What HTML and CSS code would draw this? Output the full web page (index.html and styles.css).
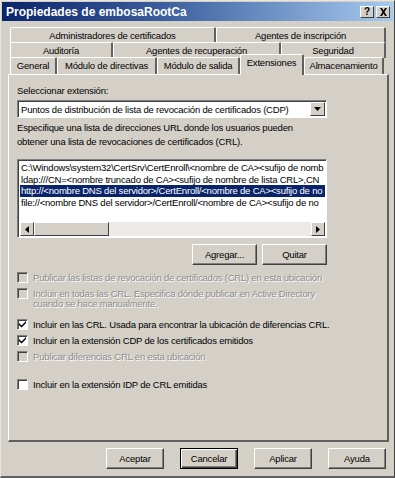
FILE: index.html
```html
<!DOCTYPE html>
<html lang="es">
<head>
  <meta charset="UTF-8" />
  <title>Propiedades de embosaRootCa</title>
  <link rel="stylesheet" href="styles.css">
</head>
<body>
<div class="window">
  <div class="titlebar">
    <span class="title">Propiedades de embosaRootCa</span>
    <div class="caption-buttons">
      <span class="cap-btn">?</span>
      <span class="cap-btn close">
        <svg width="9" height="8" viewBox="0 0 9 8"><path d="M1 0h2l1.5 2.5L6 0h2L5.5 4 8 8H6L4.5 5.5 3 8H1l2.5-4z" fill="#000"/></svg>
      </span>
    </div>
  </div>

  <!-- tabs, back rows first -->
  <div class="tabs">
    <div class="tab-row back">
      <div class="tab w-admin">Administradores de certificados</div>
      <div class="tab w-insc">Agentes de inscripción</div>
    </div>
    <div class="tab-row back">
      <div class="tab w-audit">Auditoría</div>
      <div class="tab w-recup">Agentes de recuperación</div>
      <div class="tab w-seg">Seguridad</div>
    </div>
    <div class="tab-row front">
      <div class="tab w-gen">General</div>
      <div class="tab w-dir">Módulo de directivas</div>
      <div class="tab w-sal">Módulo de salida</div>
      <div class="tab w-ext active">Extensiones</div>
      <div class="tab w-alm">Almacenamiento</div>
    </div>
  </div>

  <div class="panel">
    <div class="label">Seleccionar extensión:</div>
    <div class="select">
      <span class="select-text">Puntos de distribución de lista de revocación de certificados (CDP)</span>
      <span class="select-btn">
        <svg width="7" height="4" viewBox="0 0 7 4"><path d="M0 0h7L3.5 4z" fill="#000"/></svg>
      </span>
    </div>
    <div class="desc">Especifique una lista de direcciones URL donde los usuarios pueden<br>obtener una lista de revocaciones de certificados (CRL).</div>

    <div class="listbox">
      <div class="items">
        <div class="item">C:\Windows\system32\CertSrv\CertEnroll\&lt;nombre de CA&gt;&lt;sufijo de nomb</div>
        <div class="item">ldap:///CN=&lt;nombre truncado de CA&gt;&lt;sufijo de nombre de lista CRL&gt;,CN</div>
        <div class="item selected">http://&lt;nombre DNS del servidor&gt;/CertEnroll/&lt;nombre de CA&gt;&lt;sufijo de no</div>
        <div class="item">file://&lt;nombre DNS del servidor&gt;/CertEnroll/&lt;nombre de CA&gt;&lt;sufijo de no</div>
      </div>
      <div class="hscroll">
        <span class="arrow">
          <svg width="4" height="7" viewBox="0 0 4 7"><path d="M4 0v7L0 3.5z" fill="#000"/></svg>
        </span>
        <span class="thumb"></span>
        <span class="track"></span>
        <span class="arrow">
          <svg width="4" height="7" viewBox="0 0 4 7"><path d="M0 0v7l4-3.5z" fill="#000"/></svg>
        </span>
      </div>
    </div>

    <div class="list-buttons">
      <button class="btn w-small">Agregar...</button>
      <button class="btn w-small">Quitar</button>
    </div>

    <div class="checks">
      <div class="check disabled c1"><span class="box"></span><span>Publicar las listas de revocación de certificados (CRL) en esta ubicación</span></div>
      <div class="check disabled c2"><span class="box"></span><span>Incluir en todas las CRL. Especifica dónde publicar en Active Directory<br>cuando se hace manualmente.</span></div>
      <div class="check c3"><span class="box checked"><svg width="7" height="7" viewBox="0 0 7 7"><path d="M0 2l2.5 2.5L7 0v2L2.5 6.5 0 4z" fill="#000"/></svg></span><span>Incluir en las CRL. Usada para encontrar la ubicación de diferencias CRL.</span></div>
      <div class="check c4"><span class="box checked"><svg width="7" height="7" viewBox="0 0 7 7"><path d="M0 2l2.5 2.5L7 0v2L2.5 6.5 0 4z" fill="#000"/></svg></span><span>Incluir en la extensión CDP de los certificados emitidos</span></div>
      <div class="check disabled c5"><span class="box"></span><span>Publicar diferencias CRL en esta ubicación</span></div>
      <div class="check c6"><span class="box"></span><span>Incluir en la extensión IDP de CRL emitidas</span></div>
    </div>
  </div>

  <div class="dialog-buttons">
    <button class="btn w-dlg">Aceptar</button>
    <button class="btn w-dlg default">Cancelar</button>
    <button class="btn w-dlg">Aplicar</button>
    <button class="btn w-dlg">Ayuda</button>
  </div>
</div>
</body>
</html>
```

FILE: styles.css
```css
body {
  margin: 0;
  font-family: "Liberation Sans", Arial, sans-serif;
  font-size: 9.5px;
  letter-spacing: -0.2px;
  color: #000;
  background: #d4d0c8;
}
.window {
  width: 395px;
  height: 478px;
  box-sizing: border-box;
  background: #d4d0c8;
  border-top: 1px solid #e8e6e0;
  border-left: 1px solid #e8e6e0;
  border-right: 1px solid #404040;
  border-bottom: 2px solid #606060;
  padding: 1px;
  overflow: hidden;
}
.titlebar {
  height: 19px;
  display: flex;
  align-items: center;
  justify-content: space-between;
  background: linear-gradient(to right, #0a246a, #3a5c9c 40%, #a6caf0);
  padding: 0 3px 0 4px;
}
.title {
  color: #fff;
  font-weight: bold;
  font-size: 12px;
  letter-spacing: 0;
}
.caption-buttons {
  display: flex;
  gap: 2px;
}
.cap-btn {
  width: 14px;
  height: 12px;
  box-sizing: border-box;
  background: #d4d0c8;
  border-top: 1px solid #fff;
  border-left: 1px solid #fff;
  border-right: 1px solid #404040;
  border-bottom: 1px solid #404040;
  font-weight: bold;
  font-size: 10px;
  line-height: 10px;
  text-align: center;
  display: flex;
  align-items: center;
  justify-content: center;
}

/* tabs */
.tabs {
  margin-top: 6px;
  padding: 0 0 0 8px;
}
.tab-row {
  display: flex;
  height: 16px;
}
.tab-row.back + .tab-row {
  margin-top: -1px;
}
.tab-row.front {
  height: 17px;
  position: relative;
  z-index: 1;
}
.tab {
  box-sizing: border-box;
  border-top: 1px solid #fff;
  border-left: 1px solid #fff;
  border-right: 2px solid #606060;
  border-radius: 2px 2px 0 0;
  text-align: center;
  line-height: 15px;
  white-space: nowrap;
  background: #d4d0c8;
}
.tab.active {
  height: 21px;
  margin-top: -3px;
  line-height: 16px;
}
.w-admin { width: 206px; }
.w-insc  { width: 170px; }
.w-audit { width: 103px; }
.w-recup { width: 168px; }
.w-seg   { width: 105px; }
.w-gen   { width: 47px; }
.w-dir   { width: 100px; }
.w-sal   { width: 83px; }
.w-ext   { width: 64px; }
.w-alm   { width: 80px; }

/* panel */
.panel {
  margin: 0 4px 0 6px;
  height: 368px;
  box-sizing: border-box;
  border-top: 1px solid #fff;
  border-left: 1px solid #fff;
  border-right: 2px solid #606060;
  border-bottom: 2px solid #606060;
  padding: 0 8px;
}
.label {
  margin-top: 9px;
  line-height: 13px;
}
.select {
  margin-top: 3px;
  width: 310px;
  height: 18px;
  box-sizing: border-box;
  background: #fff;
  border-top: 1px solid #808080;
  border-left: 1px solid #808080;
  border-right: 1px solid #fff;
  border-bottom: 1px solid #fff;
  box-shadow: inset 1px 1px 0 #404040;
  display: flex;
  align-items: center;
  padding: 0 1px 0 3px;
}
.select-text {
  flex: 1;
  white-space: nowrap;
}
.select-btn {
  width: 15px;
  height: 14px;
  box-sizing: border-box;
  background: #d4d0c8;
  border-top: 1px solid #fff;
  border-left: 1px solid #fff;
  border-right: 1px solid #404040;
  border-bottom: 1px solid #404040;
  display: flex;
  align-items: center;
  justify-content: center;
}
.desc {
  margin-top: 3px;
  line-height: 14px;
}
.listbox {
  margin-top: 10px;
  width: 310px;
  height: 79px;
  box-sizing: border-box;
  background: #fff;
  border-top: 1px solid #808080;
  border-left: 1px solid #808080;
  border-right: 1px solid #fff;
  border-bottom: 1px solid #fff;
  box-shadow: inset 1px 1px 0 #404040;
  display: flex;
  flex-direction: column;
  padding: 2px 1px 1px 2px;
}
.items {
  flex: 1;
}
.item {
  line-height: 11.5px;
  white-space: nowrap;
  padding-left: 1px;
}
.item.selected {
  background: #0a246a;
  color: #fff;
}
.hscroll {
  height: 14px;
  display: flex;
  background: #eceae6;
}
.hscroll .arrow,
.hscroll .thumb {
  box-sizing: border-box;
  background: #d4d0c8;
  border-top: 1px solid #fff;
  border-left: 1px solid #fff;
  border-right: 1px solid #404040;
  border-bottom: 1px solid #404040;
}
.hscroll .arrow {
  width: 14px;
  display: flex;
  align-items: center;
  justify-content: center;
}
.hscroll .thumb {
  width: 75px;
}
.hscroll .track {
  flex: 1;
}
.list-buttons {
  margin-top: 6px;
  width: 310px;
  display: flex;
  justify-content: flex-end;
  gap: 5px;
}
.btn {
  box-sizing: border-box;
  height: 21px;
  font-family: "Liberation Sans", Arial, sans-serif;
  font-size: 9.5px;
  letter-spacing: -0.2px;
  color: #000;
  background: #d4d0c8;
  border-top: 1px solid #fff;
  border-left: 1px solid #fff;
  border-right: 1px solid #404040;
  border-bottom: 1px solid #404040;
  box-shadow: inset -1px -1px 0 #808080;
  padding: 0;
}
.btn.w-small { width: 65px; }
.btn.w-dlg { width: 58px; }
.btn.default {
  border: 1px solid #000;
  box-shadow: inset 1px 1px 0 #fff, inset -1px -1px 0 #404040, inset -2px -2px 0 #808080;
}

/* checkboxes */
.checks {
  margin-top: 8px;
}
.check {
  display: flex;
  align-items: flex-start;
  line-height: 10px;
}
.check .box {
  width: 11px;
  height: 11px;
  flex: none;
  box-sizing: border-box;
  background: #fff;
  border-top: 1px solid #808080;
  border-left: 1px solid #808080;
  border-right: 1px solid #fff;
  border-bottom: 1px solid #fff;
  box-shadow: inset 1px 1px 0 #404040;
  margin: -1px 5px 0 0;
  display: flex;
  align-items: center;
  justify-content: center;
}
.check.disabled {
  color: #8c8c8c;
  text-shadow: 1px 1px 0 #fff;
}
.check.disabled .box {
  background: #d4d0c8;
}
.check.c2 { margin-top: 6px; }
.check.c3 { margin-top: 11px; }
.check.c4 { margin-top: 6px; }
.check.c5 { margin-top: 6px; }
.check.c6 { margin-top: 18px; }

.dialog-buttons {
  display: flex;
  justify-content: flex-end;
  gap: 16px;
  margin: 6px 7px 0 0;
  height: 21px;
}
```
